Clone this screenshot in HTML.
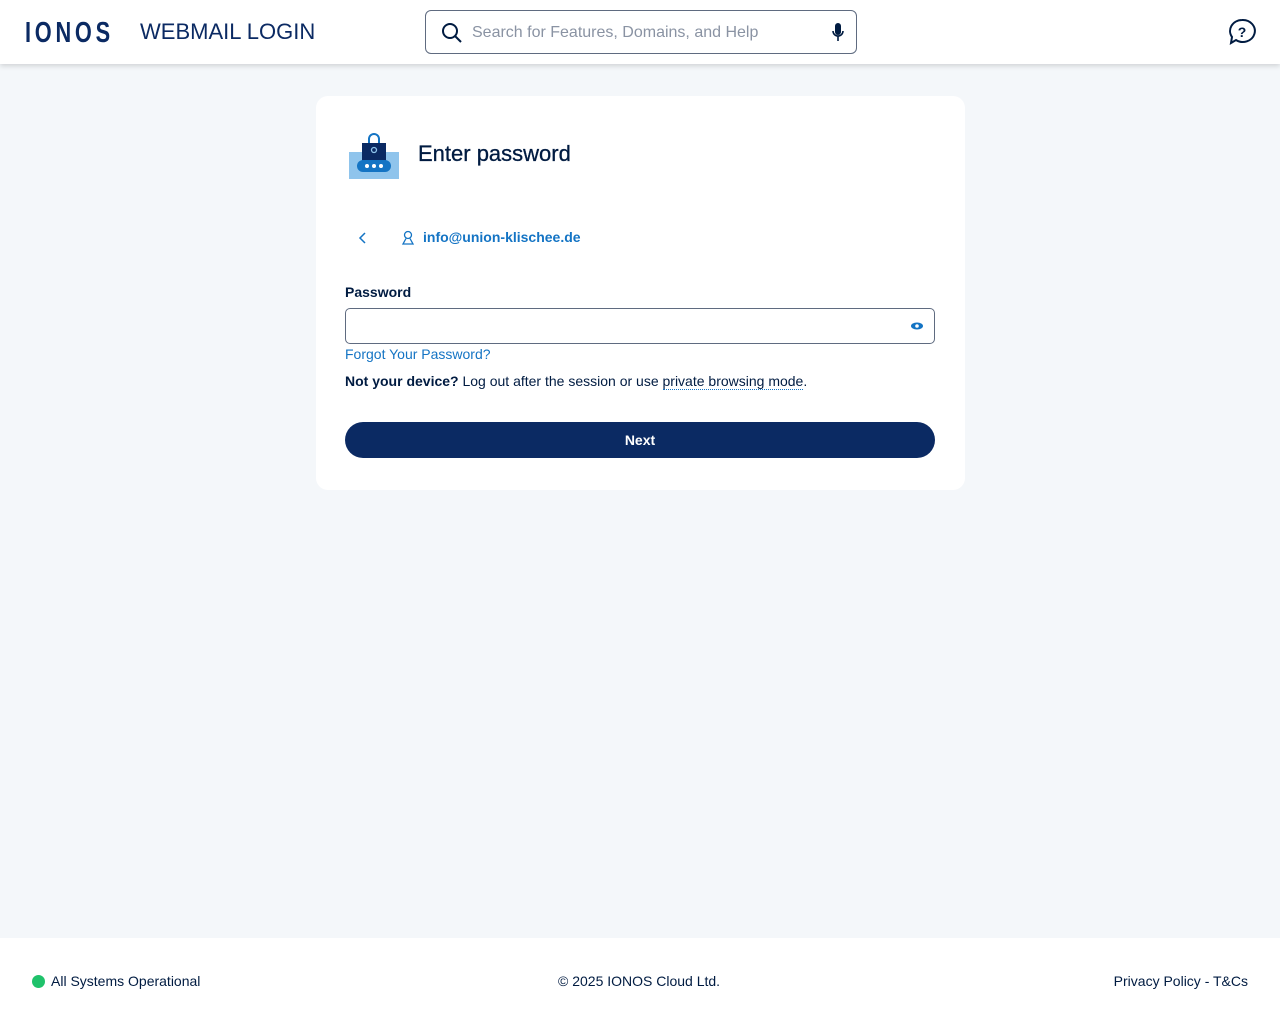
<!DOCTYPE html>
<html><head><meta charset="utf-8"><style>
*{box-sizing:border-box;margin:0;padding:0}
body{width:1280px;height:1024px;background:#f4f7fa;font-family:"Liberation Sans",sans-serif;position:relative;overflow:hidden;color:#001b41}
.hdr{position:absolute;top:0;left:0;width:1280px;height:64px;background:#fff;box-shadow:0 2px 5px rgba(0,0,0,.15)}
.logo{position:absolute;left:25px;top:17px;font-size:29px;font-weight:bold;color:#0b2a63;letter-spacing:5px;transform:scaleX(.75);transform-origin:left}
.title{position:absolute;left:140px;top:19px;font-size:22px;color:#0b2a63}
.search{position:absolute;left:425px;top:10px;width:432px;height:44px;border:1px solid #5f6b80;border-radius:6px}
.search span{position:absolute;left:46px;top:13px;font-size:16px;color:#8a93a3}
.card{position:absolute;left:316px;top:96px;width:649px;height:394px;background:#fff;border-radius:12px}
.h{position:absolute;left:102px;top:45px;font-size:22px;color:#001b41;-webkit-text-stroke:0.3px #001b41}
.email{position:absolute;left:107px;top:133px;font-size:14px;font-weight:bold;color:#1474c4}
.lbl{position:absolute;left:29px;top:188px;font-size:14px;font-weight:bold}
.inp{position:absolute;left:29px;top:212px;width:590px;height:36px;border:1px solid #5f6b80;border-radius:5px}
.fp{position:absolute;left:29px;top:250px;font-size:14px;color:#1474c4}
.nd{position:absolute;left:29px;top:277px;font-size:14px}
.nd u{text-decoration:none;border-bottom:1px dotted #1474c4}
.btn{position:absolute;left:29px;top:326px;width:590px;height:36px;background:#0b2a63;border-radius:18px;color:#fff;font-size:14px;font-weight:bold;text-align:center;line-height:36px}
.ftr{position:absolute;top:938px;left:0;width:1280px;height:86px;background:#fff;font-size:14px}
.ftr div{position:absolute;top:35px}
</style></head><body>
<div class="hdr">
<div class="logo">IONOS</div>
<div class="title">WEBMAIL LOGIN</div>
<div class="search">
<svg style="position:absolute;left:15px;top:11px" width="22" height="22" viewBox="0 0 22 22"><circle cx="9" cy="9" r="7" fill="none" stroke="#001b41" stroke-width="2"/><path d="M14 14l6 6" stroke="#001b41" stroke-width="2"/></svg>
<span>Search for Features, Domains, and Help</span>
<svg style="position:absolute;left:405px;top:12px" width="14" height="20" viewBox="0 0 14 20"><rect x="4" y="0" width="6" height="12" rx="3" fill="#001b41"/><path d="M2 8a5 5 0 0 0 10 0M7 13v5" fill="none" stroke="#001b41" stroke-width="1.6"/></svg>
</div>
<svg style="position:absolute;left:1228px;top:18px" width="28" height="28" viewBox="0 0 28 28"><path d="M14 2a12 11 0 1 1-6 20l-5 3 1-6A12 11 0 0 1 14 2z" fill="none" stroke="#001b41" stroke-width="2"/><text x="14" y="19" font-size="14" font-weight="bold" text-anchor="middle" fill="#001b41" font-family="Liberation Sans">?</text></svg>
</div>
<div class="card">
<svg style="position:absolute;left:33px;top:36px" width="50" height="48" viewBox="0 0 50 48"><rect x="0" y="20" width="50" height="27" fill="#8fc4ec"/><path d="M20 12v-5a5 5 0 0 1 10 0v5" fill="none" stroke="#1474c4" stroke-width="2"/><rect x="13" y="11" width="24" height="22" fill="#0b2a63"/><circle cx="25" cy="18" r="2.5" fill="none" stroke="#8fc4ec" stroke-width="1.3"/><rect x="8" y="28" width="34" height="12" rx="6" fill="#1474c4"/><circle cx="18" cy="34" r="2" fill="#fff"/><circle cx="25" cy="34" r="2" fill="#fff"/><circle cx="32" cy="34" r="2" fill="#fff"/></svg>
<div class="h">Enter password</div>
<svg style="position:absolute;left:42px;top:135px" width="10" height="14"><path d="M7 2L2 7l5 5" fill="none" stroke="#1474c4" stroke-width="1.5"/></svg>
<svg style="position:absolute;left:85px;top:134px" width="14" height="16" viewBox="0 0 14 16"><circle cx="7" cy="5" r="3.5" fill="none" stroke="#1474c4" stroke-width="1.3"/><path d="M5 8.5L2 14h10L9 8.5" fill="none" stroke="#1474c4" stroke-width="1.3"/></svg>
<div class="email">info@union-klischee.de</div>
<div class="lbl">Password</div>
<div class="inp"><svg style="position:absolute;right:10px;top:12px" width="14" height="10"><ellipse cx="7" cy="5" rx="6" ry="3.5" fill="#1474c4"/><circle cx="7" cy="5" r="1.8" fill="#fff"/></svg></div>
<div class="fp">Forgot Your Password?</div>
<div class="nd"><b>Not your device?</b> Log out after the session or use <u>private browsing mode</u>.</div>
<div class="btn">Next</div>
</div>
<div class="ftr">
<div style="left:32px"><span style="display:inline-block;width:13px;height:13px;border-radius:50%;background:#1fc26b;vertical-align:-2px;margin-right:6px"></span>All Systems Operational</div>
<div style="left:558px">© 2025 IONOS Cloud Ltd.</div>
<div style="right:32px">Privacy Policy - T&amp;Cs</div>
</div>
</body></html>
